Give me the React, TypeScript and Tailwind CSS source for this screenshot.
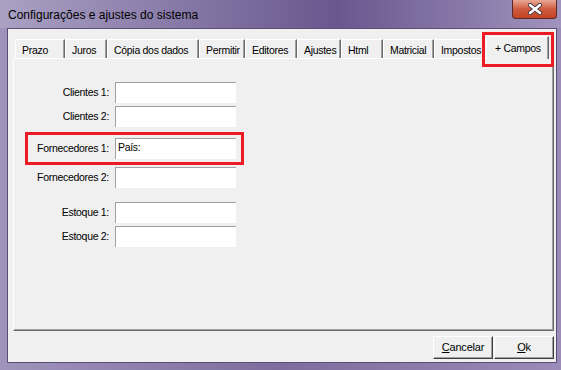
import React from 'react';

const tabs = [
  { label: 'Prazo', w: 'w-[50px]' },
  { label: 'Juros', w: 'w-[42px]' },
  { label: 'Cópia dos dados', w: 'w-[92px]' },
  { label: 'Permitir', w: 'w-[46px]' },
  { label: 'Editores', w: 'w-[52px]' },
  { label: 'Ajustes', w: 'w-[44px]' },
  { label: 'Html', w: 'w-[42px]' },
  { label: 'Matricial', w: 'w-[51px]' },
  { label: 'Impostos', w: 'w-[54px]' },
];

const fields = [
  { label: 'Clientes 1:', mt: 'mt-[23px]' },
  { label: 'Clientes 2:', mt: 'mt-[3px]' },
  { label: 'Fornecedores 1:', mt: 'mt-[11px]', value: 'País:' },
  { label: 'Fornecedores 2:', mt: 'mt-[8px]' },
  { label: 'Estoque 1:', mt: 'mt-[14px]' },
  { label: 'Estoque 2:', mt: 'mt-[3px]' },
];

const CloseGlyph = () => (
  <svg width="16" height="12" viewBox="0 0 16 12">
    <path d="M3 2 L13 10 M13 2 L3 10" stroke="#4a3a48" strokeWidth="4.2" strokeLinecap="round" />
    <path d="M3 2 L13 10 M13 2 L3 10" stroke="#ffffff" strokeWidth="2.4" strokeLinecap="round" />
  </svg>
);

const Button = ({ first, rest }: { first: string; rest: string }) => (
  <button className="w-[60px] h-[23px] bg-[#f0f0f0] border border-t-white border-l-white border-r-[#404040] border-b-[#404040] shadow-[inset_-1px_-1px_0_#a0a0a0] text-[11px] tracking-[-0.2px] text-black">
    <span className="underline">{first}</span>
    {rest}
  </button>
);

export default function App() {
  return (
    <div
      className="w-[561px] h-[370px] flex flex-col bg-gradient-to-r from-[#9f93bb] via-[#7d6c9d] to-[#9b8bb8] overflow-hidden"
      style={{ fontFamily: '"Liberation Sans", Arial, sans-serif' }}
    >
      {/* title bar */}
      <div className="relative h-[28px] shrink-0 bg-gradient-to-r from-[#aaa1c3] via-[#6a578e] via-60% to-[#a193bd]">
        <div className="pl-[8px] pt-[6px] text-[12px] text-black">Configurações e ajustes do sistema</div>
        <div className="absolute right-[4px] top-0 w-[45px] h-[19px] rounded-b-[4px] border border-t-0 border-[#5a2a2a] bg-gradient-to-b from-[#eaa896] via-[#cd5a3e] to-[#c44422] flex items-center justify-center">
          <CloseGlyph />
        </div>
      </div>

      {/* client area */}
      <div className="flex-1 ml-[7px] mr-[4px] mb-[7px] border border-[#5b4c73] bg-[#f0f0f0] flex flex-col pl-[5px] pr-[2px] text-[10.5px] tracking-[-0.3px] text-black relative">
        {/* tab row */}
        <div className="mt-[6px] h-[23px] flex items-end pl-[2px] relative z-10">
          {tabs.map((t) => (
            <div
              key={t.label}
              className={`${t.w} h-[19px] shrink-0 border-t border-l border-white border-r border-r-[#696969] shadow-[inset_-1px_0_0_#a0a0a0] pl-[6px] pt-[3px] whitespace-nowrap overflow-hidden`}
            >
              {t.label}
            </div>
          ))}
          <div className="w-[63px] h-[23px] -ml-[2px] shrink-0 bg-[#f0f0f0] border-t border-l border-white border-r border-r-[#696969] shadow-[inset_-1px_0_0_#a0a0a0] pl-[8px] pt-[4px] -mb-[1px] whitespace-nowrap">
            + Campos
          </div>
        </div>

        {/* panel */}
        <div className="h-[273px] border border-t-white border-l-white border-r-[#696969] border-b-[#696969] shadow-[inset_-1px_-1px_0_#a0a0a0] flex flex-col">
          {fields.map((f) => (
            <div key={f.label} className={`${f.mt} flex items-center h-[21px]`}>
              <div className="w-[96px] text-right pr-[1px]">{f.label}</div>
              <div className="ml-[5px] w-[121px] h-[21px] bg-white border-t border-l border-[#a0a0a0] pl-[2px] pt-[1px] leading-[14px]">
                {f.value ?? ''}
              </div>
            </div>
          ))}
        </div>

        {/* buttons */}
        <div className="mt-[5px] flex justify-end gap-[1px]">
          <Button first="C" rest="ancelar" />
          <Button first="O" rest="k" />
        </div>

        {/* annotation boxes */}
        <div className="absolute left-[474px] top-[3px] w-[72px] h-[35px] border-[3px] border-[#ed1c24] z-20 pointer-events-none" />
        <div className="absolute left-[17px] top-[103px] w-[219px] h-[33px] border-[3px] border-[#ed1c24] z-20 pointer-events-none" />
      </div>
    </div>
  );
}
